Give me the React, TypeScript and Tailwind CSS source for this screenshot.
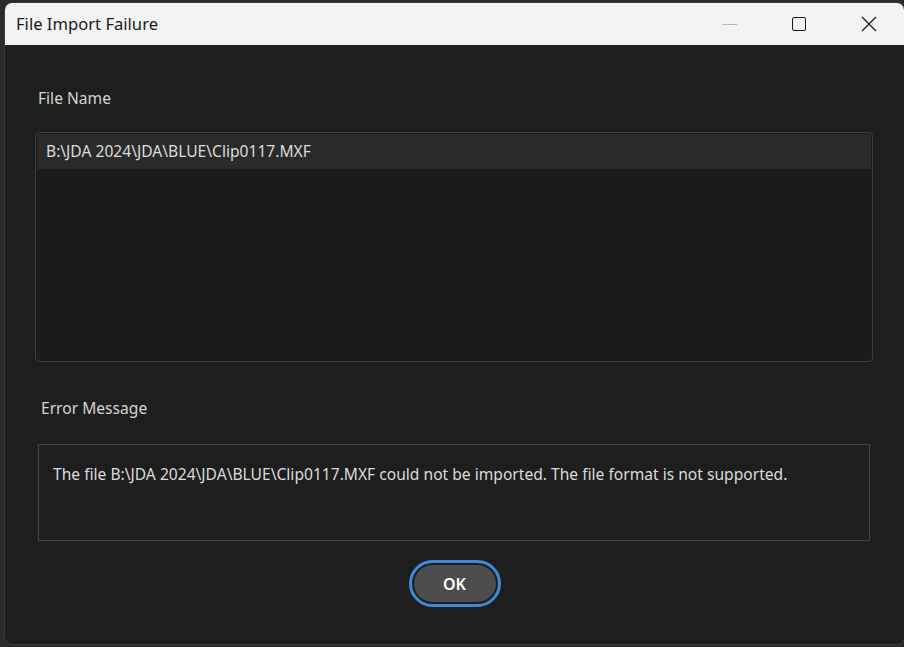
import React from 'react';

const App: React.FC = () => {
  const path = 'B:\\JDA 2024\\JDA\\BLUE\\Clip0117.MXF';

  return (
    <div
      className="w-[904px] h-[647px] bg-[#2b2b2b] pl-[4px] pt-[2px] pb-[2px] overflow-hidden"
      style={{ fontFamily: "'Noto Sans', 'Open Sans', sans-serif" }}
    >
      <div className="flex flex-col h-full w-[901px] rounded-t-[8px] rounded-b-[8px] border border-[#3c3c3c] bg-[#1e1e1e] overflow-hidden">
        {/* Title bar */}
        <div className="flex items-center h-[42px] bg-[#f3f3f3] shrink-0">
          <span className="pl-[11px] text-[16.6px] text-[#1a1a1a]">File Import Failure</span>
          <div className="ml-auto flex items-center h-full">
            <div className="w-[70px] h-full flex items-center justify-center">
              <div className="w-[15px] h-px bg-[#b8b8b8]" />
            </div>
            <div className="w-[70px] h-full flex items-center justify-center">
              <div className="w-[14px] h-[14px] border-[1.5px] border-[#1a1a1a] rounded-[2px]" />
            </div>
            <div className="w-[70px] h-full flex items-center justify-center">
              <svg width="16" height="16" viewBox="0 0 16 16" fill="none" stroke="#1a1a1a" strokeWidth="1.3">
                <path d="M1 1L15 15M15 1L1 15" />
              </svg>
            </div>
          </div>
        </div>

        {/* Body */}
        <div className="flex flex-col flex-1 px-[30px] pt-[42px] text-[#d4d4d4]">
          <div className="pl-[3px] text-[15.6px] leading-[22px]">File Name</div>
          <div className="mt-[23px] mr-[1px] h-[230px] rounded-[4px] border border-[#3e3e3e] bg-[#1b1b1b] p-[1px]">
            <div className="h-[35px] bg-[#2a2a2a] flex items-center pl-[9px] text-[15.6px] text-[#dcdcdc]">
              {path}
            </div>
          </div>

          <div className="mt-[35px] pl-[6px] text-[15.6px] leading-[22px]">Error Message</div>
          <div className="mt-[25px] ml-[3px] mr-[4px] h-[97px] border border-[#464646] bg-[#1e1e1e] pl-[14px] pt-[18px] text-[15.6px] text-[#dcdcdc]">
            The file {path} could not be imported. The file format is not supported.
          </div>

          <div className="mt-[19px] flex justify-center">
            <div className="rounded-full border-[3px] border-[#3d8bd9] p-[2px] bg-[#1e1e1e]">
              <div className="w-[82px] h-[37px] rounded-full bg-[#4d4d4d] flex items-center justify-center text-[16px] font-semibold text-white">
                OK
              </div>
            </div>
          </div>
        </div>
      </div>
    </div>
  );
};

export default App;
